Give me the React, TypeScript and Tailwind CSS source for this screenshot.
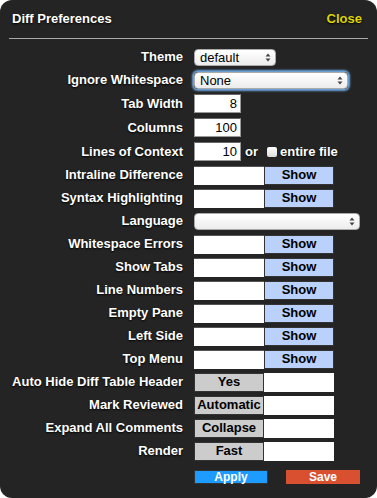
import React from "react";

const font = { fontFamily: '"Liberation Sans", Arial, sans-serif' };

function Arrows() {
  return (
    <svg width="6" height="9" viewBox="0 0 6 9" className="shrink-0">
      <path d="M3 0.5 L5.5 3.5 H0.5 Z" fill="#444" />
      <path d="M3 8.5 L5.5 5.5 H0.5 Z" fill="#444" />
    </svg>
  );
}

function Select({ value, w, focus }: { value: string; w: string; focus?: boolean }) {
  return (
    <div
      className={`${w} flex h-[17px] items-center justify-between rounded-[4px] border border-[#aaa] bg-gradient-to-b from-white to-[#ececec] pl-[5px] pr-[4px] text-[13px] leading-none text-black ${
        focus ? "shadow-[0_0_2px_2px_#6ea6dd]" : ""
      }`}
    >
      <span>{value}</span>
      <Arrows />
    </div>
  );
}

function NumInput({ value }: { value: string }) {
  return (
    <div className="flex h-[19px] w-[47px] items-center justify-end border border-[#999] border-t-[#666] bg-white pr-[3px] text-[13px] font-normal text-black [text-shadow:none]">
      {value}
    </div>
  );
}

function Toggle({ text, left }: { text: string; left?: boolean }) {
  const btn = left ? "bg-[#cbcccb] border-[#333]" : "bg-[#b9d1fb] border-[#333]";
  return (
    <div className="flex h-[19px]">
      {left ? (
        <>
          <div className={`flex w-[70px] items-center justify-center border ${btn} text-[13px] font-bold text-black`}>
            {text}
          </div>
          <div className="w-[70px] bg-white" />
        </>
      ) : (
        <>
          <div className="w-[70px] bg-white border-t border-[#555]" />
          <div className={`flex w-[70px] items-center justify-center border ${btn} text-[13px] font-bold text-black`}>
            {text}
          </div>
        </>
      )}
    </div>
  );
}

type Row = { label: string; control: React.ReactNode; tall?: boolean };

const rows: Row[] = [
  { label: "Theme", control: <Select value="default" w="w-[82px]" /> },
  { label: "Ignore Whitespace", control: <Select value="None" w="w-[154px]" focus /> },
  { label: "Tab Width", control: <NumInput value="8" />, tall: true },
  { label: "Columns", control: <NumInput value="100" />, tall: true },
  {
    label: "Lines of Context",
    tall: true,
    control: (
      <div className="flex items-center text-[13px] font-bold text-white">
        <NumInput value="10" />
        <span className="ml-[4px] [text-shadow:0_1px_2px_#000]">or</span>
        <span className="ml-[9px] mr-[3px] inline-block h-[10px] w-[10px] rounded-[2px] bg-gradient-to-b from-white to-[#ddd]" />
        <span className="[text-shadow:0_1px_2px_#000]">entire file</span>
      </div>
    ),
  },
  { label: "Intraline Difference", control: <Toggle text="Show" /> },
  { label: "Syntax Highlighting", control: <Toggle text="Show" /> },
  { label: "Language", control: <Select value="" w="w-[166px]" /> },
  { label: "Whitespace Errors", control: <Toggle text="Show" /> },
  { label: "Show Tabs", control: <Toggle text="Show" /> },
  { label: "Line Numbers", control: <Toggle text="Show" /> },
  { label: "Empty Pane", control: <Toggle text="Show" /> },
  { label: "Left Side", control: <Toggle text="Show" /> },
  { label: "Top Menu", control: <Toggle text="Show" /> },
  { label: "Auto Hide Diff Table Header", control: <Toggle text="Yes" left /> },
  { label: "Mark Reviewed", control: <Toggle text="Automatic" left /> },
  { label: "Expand All Comments", control: <Toggle text="Collapse" left /> },
  { label: "Render", control: <Toggle text="Fast" left /> },
];

export default function App() {
  return (
    <div className="h-[498px] w-[377px] bg-white" style={font}>
      <div className="flex h-full flex-col rounded-[12px] bg-[#242424]">
        <header className="flex items-center justify-between px-[12px] pt-[9px] pb-[9px]">
          <h1 className="text-[13px] font-bold text-white [text-shadow:0_1px_2px_#000]">Diff Preferences</h1>
          <span className="mr-[3px] text-[13px] font-bold text-[#dcd500] [text-shadow:0_1px_2px_#000]">Close</span>
        </header>
        <div className="mx-[9px] h-px bg-[#aaa]" />

        <div className="mt-[7px] flex flex-col">
          {rows.map((r) => (
            <div key={r.label} className={`flex items-center ${r.tall ? "h-[24px]" : "h-[23px]"}`}>
              <div className="w-[183px] shrink-0 text-right text-[13px] font-bold text-white [text-shadow:0_1px_2px_#000]">
                {r.label}
              </div>
              <div className="ml-[11px]">{r.control}</div>
            </div>
          ))}
        </div>

        <div className="ml-[194px] mt-[7px] flex gap-[18px]">
          <button className="h-[14px] w-[74px] border border-[#333] bg-[#1e9bff] text-[12px] font-bold leading-none text-white">
            Apply
          </button>
          <button className="h-[14px] w-[74px] bg-[#d95031] text-[12px] font-bold leading-none text-white">
            Save
          </button>
        </div>
      </div>
    </div>
  );
}
